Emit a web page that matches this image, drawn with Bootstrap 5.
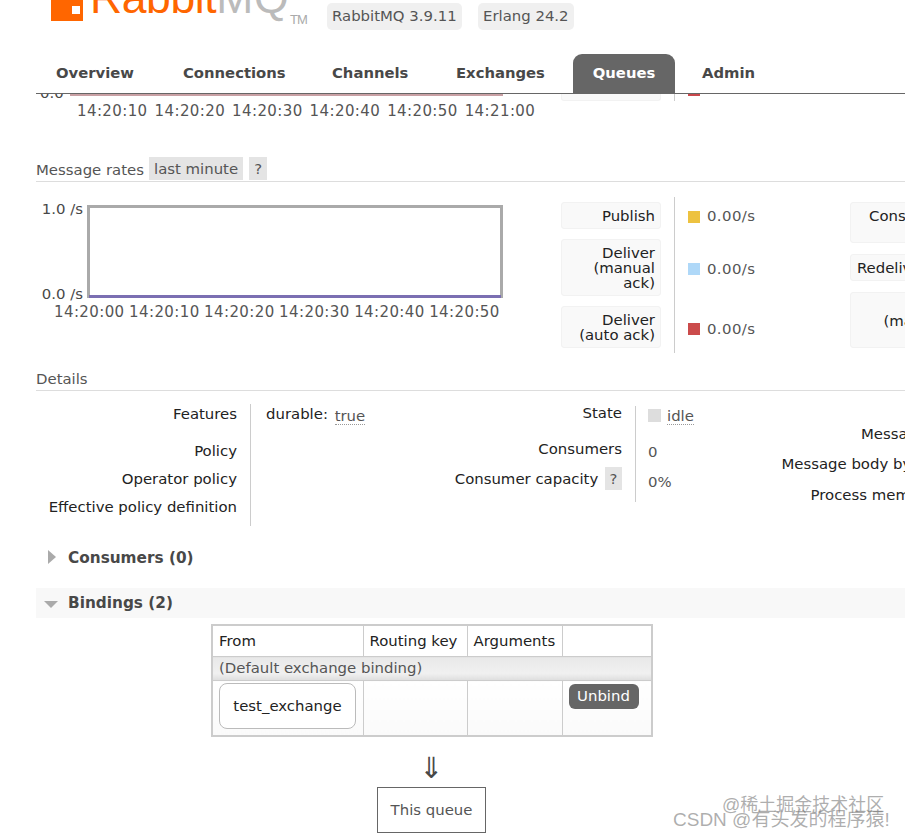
<!DOCTYPE html>
<html lang="en">
<head>
  <meta charset="UTF-8" />
  <title>RabbitMQ Management</title>
  <link href="https://cdn.jsdelivr.net/npm/bootstrap@5.3.0/dist/css/bootstrap.min.css" rel="stylesheet" />
  <style>
    html, body { height: 838px; overflow: hidden; }
    body { font-family: "DejaVu Sans", Verdana, sans-serif; font-size: 14.9px; color: #484848; background: #fff; position: relative; }
    a { text-decoration: none; }

    /* header sits over the scrolled page */
    .top-bar { position: absolute; top: 0; left: 0; right: 0; height: 94px; background: #fff; z-index: 5; overflow: hidden; }
    .logo-wrap { height: 22px; margin-left: 51px; width: 240px; gap: 7px; overflow: hidden; }
    .logo-box { width: 32px; height: 21px; background: #f60; position: relative; flex: none; }
    .logo-box::after { content: ""; position: absolute; right: 3px; top: 6px; width: 8px; height: 8px; background: #fff; }
    .logo-text { font-family: "Liberation Sans", Arial, sans-serif; font-size: 44.5px; line-height: 47px; margin-top: -26px; white-space: nowrap; color: #f60; letter-spacing: -.4px; }
    .logo-text span { color: #bbb; letter-spacing: .6px; }
    .logo-tm { font-family: "Liberation Sans", Arial, sans-serif; font-size: 13px; letter-spacing: -1px; color: #aaa; position: absolute; left: 290px; top: 10px; }
    .ver-tag { position: absolute; top: 3px; height: 27px; line-height: 26px; padding: 0 5px; background: #f0f0f0; border-radius: 5px; color: #555; white-space: nowrap; }
    .tab-row { position: absolute; left: 36px; right: 0; top: 54px; height: 40px; border-bottom: 1px solid #666; }
    .tab-item { position: absolute; top: 0; height: 40px; line-height: 38px; font-weight: 700; font-size: 14.8px; color: #484848; white-space: nowrap; }
    .tab-on { background: #666; color: #fff; border-radius: 9px 9px 0 0; width: 102px; text-align: center; height: 40px; }

    .page-main { padding: 84px 0 0 36px; width: 1100px; }
    .rate-block { display: flex; }
    .plot-col { width: 525px; flex: none; }
    .y-tick { width: 47px; text-align: right; }
    .plot-box { width: 416px; height: 93px; border: 3px solid #aaa; border-bottom: 0; position: relative; margin: 8px 0 0 4px; }
    .plot-box::after { content: ""; position: absolute; left: -1px; right: -1px; bottom: 0; height: 3px; background: #7b6fb2; }
    .y-axis { height: 108px; width: 47px; padding-top: 1px; }
    .x-axis { color: #555; white-space: nowrap; line-height: 16px; font-size: 15px; letter-spacing: .4px; }

    .leg-grid { display: grid; grid-template-columns: 100px 13px 1px 13px 162px; row-gap: 10px; padding: 5px 0 5px; align-items: stretch; }
    .leg-line { grid-column: 3; grid-row: 1 / -1; background: #ccc; margin: -5px 0; }
    .leg-name { grid-column: 1; background: #f9f9f9; border: 1px solid #f2f2f2; border-radius: 3px; color: #222; text-align: right; line-height: 15px; padding: 6px 5px 0 0; }
    .leg-val { grid-column: 5; display: flex; align-items: center; gap: 7px; color: #555; letter-spacing: .4px; padding-top: 2px; }
    .leg-dot { width: 12px; height: 12px; flex: none; }
    .leg-second { grid-template-columns: 105px; row-gap: 11px; }
    .leg-second .leg-name { padding-right: 9px; }

    .sec-head { border-bottom: 1px solid #ddd; color: #555; height: 25px; line-height: 26px; gap: 5px; }
    .help-tag { background: #e4e4e4; padding: 0 5px; height: 23px; line-height: 25px; color: #555; display: inline-block; }

    .kv-grid { display: grid; }
    .kv-label { color: #222; text-align: right; white-space: nowrap; padding-right: 13px; border-right: 1px solid #ccc; line-height: 14px; }
    .kv-val { color: #555; white-space: nowrap; line-height: 20px; }
    .kv-first { width: 215px; grid-template-columns: 215px 260px; grid-template-rows: 37px 28px 28px 29px; }
    .kv-first .kv-label { line-height: 20px; }
    .kv-first .kv-val { padding-left: 15px; }
    .kv-second { grid-template-columns: 186px 120px; grid-template-rows: 36px 30px 30px; margin-top: 2px; }
    .kv-second .kv-val { padding-left: 12px; }
    .kv-third { margin-top: 20px; grid-template-columns: 170px; grid-template-rows: 30px 31px 30px; }
    .kv-third .kv-label { border-right: 0; padding-right: 0; line-height: 20px; }
    .dash-under { border-bottom: 1px dotted #999; line-height: 15px; display: inline-block; }
    .true-val { margin: 5px 0 0 2px; vertical-align: top; }
    .state-dot { width: 13px; height: 13px; background: #ddd; display: inline-block; margin-right: 6px; vertical-align: -1px; }
    .kv-help { margin: -5px 0 -5px 2px; height: 23px; width: 17px; padding: 0; text-align: center; vertical-align: top; }

    .fold-head { font-weight: 700; color: #484848; font-size: 15.3px; padding-left: 32px; position: relative; }
    .fold-closed { height: 30px; line-height: 30px; margin-top: 17px; }
    .fold-closed::before { content: ""; position: absolute; left: 12px; top: 7px; border-left: 8px solid #aaa; border-top: 7px solid transparent; border-bottom: 7px solid transparent; }
    .fold-open { height: 30px; line-height: 30px; margin-top: 15px; background: #f8f8f8; }
    .fold-open::before { content: ""; position: absolute; left: 8px; top: 13px; border-top: 7px solid #aaa; border-left: 7px solid transparent; border-right: 7px solid transparent; }

    .bind-wrap { margin: 6px 0 0 175px; width: 441px; }
    .bind-table { width: 440px; table-layout: fixed; border-collapse: collapse; border: 2px solid #ccc; color: #222; }
    .bind-table th, .bind-table td { border: 1px solid #ccc; font-weight: 400; padding: 0 6px; vertical-align: top; }
    .bind-table thead th { height: 30px; line-height: 30px; }
    .bind-group td { height: 24px; line-height: 22px; color: #555; background: linear-gradient(#e8e8e8, #f0f0f0 70%, #ddd); }
    .bind-body td { height: 55px; background: linear-gradient(#fff, #fafafa); }
    .exch-box { display: block; width: 137px; height: 46px; line-height: 44px; border: 1px solid #bbb; border-radius: 8px; text-align: center; background: #fff; margin: 2px 0 0; color: #222; }
    .unbind-btn { background: #666; color: #fff; border: 0; border-radius: 6px; height: 25px; width: 70px; padding: 0; line-height: 25px; margin-top: 3px; font-size: 14.9px; }
    .flow-arrow { font-size: 29px; line-height: 30px; text-align: center; margin-top: 16px; color: #484848; height: 34px; }
    .queue-box { width: 109px; height: 46px; line-height: 44px; border: 1px solid #666; text-align: center; margin: 0 auto; color: #555; }

    .mark-text { position: absolute; font-family: "Liberation Sans", "Noto Sans CJK SC", sans-serif; font-size: 18px; color: rgba(120,120,120,.6); white-space: nowrap; z-index: 6; line-height: 20px; }
  </style>
</head>
<body>
  <header class="top-bar">
    <div class="logo-wrap d-flex align-items-start">
      <div class="logo-box"></div>
      <div class="logo-text">Rabbit<span>MQ</span></div>
    </div>
    <div class="logo-tm">TM</div>
    <span class="ver-tag" style="left:327px">RabbitMQ 3.9.11</span>
    <span class="ver-tag" style="left:478px">Erlang 24.2</span>
    <nav class="tab-row">
      <a class="tab-item" style="left:20px">Overview</a>
      <a class="tab-item" style="left:147px">Connections</a>
      <a class="tab-item" style="left:296px">Channels</a>
      <a class="tab-item" style="left:420px">Exchanges</a>
      <a class="tab-item tab-on" style="left:537px">Queues</a>
      <a class="tab-item" style="left:666px">Admin</a>
    </nav>
  </header>

  <main class="page-main">
    <!-- tail of the chart above, scrolled under the header -->
    <div class="rate-block" style="height:36px">
      <div class="plot-col">
        <div class="d-flex" style="height:19px">
          <div style="width:34px;padding:0 0 0 4px;line-height:18px">0.0</div>
          <div style="width:433px;height:2px;background:#c9a0a4;margin-top:10px"></div>
        </div>
        <div class="x-axis" style="padding-left:41px;word-spacing:1.8px">14:20:10 14:20:20 14:20:30 14:20:40 14:20:50 14:21:00</div>
      </div>
      <div class="leg-grid" style="padding:0;row-gap:0;grid-template-rows:17px;height:23px">
        <div class="leg-name" style="border-top:0"></div>
        <div class="leg-line" style="margin:0"></div>
        <div class="leg-val" style="align-items:flex-start;padding:0"><span class="leg-dot" style="background:#c9484c"></span></div>
      </div>
    </div>

    <div class="sec-head d-flex" style="margin-top:37px">
      <span>Message rates</span><span class="help-tag">last minute</span><span class="help-tag" style="margin-left:1px">?</span>
    </div>

    <div class="rate-block" style="margin-top:15px;height:156px">
      <div class="plot-col">
        <div class="d-flex">
          <div class="y-axis d-flex flex-column justify-content-between">
            <div class="y-tick">1.0&nbsp;/s</div>
            <div class="y-tick">0.0&nbsp;/s</div>
          </div>
          <div class="plot-box"></div>
        </div>
        <div class="x-axis" style="padding-left:18px;margin-top:-1px;word-spacing:-.7px">14:20:00 14:20:10 14:20:20 14:20:30 14:20:40 14:20:50</div>
      </div>
      <div class="leg-grid" style="grid-template-rows:27px 57px 42px">
        <div class="leg-line"></div>
        <div class="leg-name" style="grid-row:1">Publish</div>
        <div class="leg-val" style="grid-row:1"><span class="leg-dot" style="background:#edc240"></span>0.00/s</div>
        <div class="leg-name" style="grid-row:2">Deliver<br>(manual<br>ack)</div>
        <div class="leg-val" style="grid-row:2;padding-top:3px"><span class="leg-dot" style="background:#afd8f8"></span>0.00/s</div>
        <div class="leg-name" style="grid-row:3">Deliver<br>(auto ack)</div>
        <div class="leg-val" style="grid-row:3;padding-top:4px"><span class="leg-dot" style="background:#cb4b4b"></span>0.00/s</div>
      </div>
      <div class="leg-grid leg-second" style="grid-template-rows:41px 27px 56px">
        <div class="leg-name">Consumer<br>ack</div>
        <div class="leg-name">Redelivered</div>
        <div class="leg-name">Get<br>(manual<br>ack)</div>
      </div>
    </div>

    <div class="sec-head" style="margin-top:13px">Details</div>

    <div class="d-flex" style="margin-top:13px">
      <div class="kv-grid kv-first">
        <div class="kv-label">Features</div><div class="kv-val"><span style="color:#222">durable:</span> <span class="dash-under true-val">true</span></div>
        <div class="kv-label">Policy</div><div class="kv-val"></div>
        <div class="kv-label">Operator policy</div><div class="kv-val"></div>
        <div class="kv-label">Effective policy definition</div><div class="kv-val"></div>
      </div>
      <div class="kv-grid kv-second" style="margin-left:199px">
        <div class="kv-label">State</div><div class="kv-val"><span class="state-dot"></span><span class="dash-under">idle</span></div>
        <div class="kv-label">Consumers</div><div class="kv-val">0</div>
        <div class="kv-label">Consumer capacity <span class="help-tag kv-help">?</span></div><div class="kv-val">0%</div>
      </div>
      <div class="kv-grid kv-third" style="margin-left:8px">
        <div class="kv-label">Messages</div>
        <div class="kv-label">Message body bytes</div>
        <div class="kv-label">Process memory</div>
      </div>
    </div>

    <div class="fold-head fold-closed">Consumers (0)</div>
    <div class="fold-head fold-open">Bindings (2)</div>

    <div class="bind-wrap">
      <table class="bind-table">
        <colgroup><col style="width:151px"><col style="width:104px"><col style="width:95px"><col style="width:90px"></colgroup>
        <thead>
          <tr><th>From</th><th>Routing key</th><th>Arguments</th><th></th></tr>
        </thead>
        <tbody>
          <tr class="bind-group"><td colspan="4">(Default exchange binding)</td></tr>
          <tr class="bind-body">
            <td><a class="exch-box">test_exchange</a></td>
            <td></td>
            <td></td>
            <td><button class="unbind-btn btn">Unbind</button></td>
          </tr>
        </tbody>
      </table>
      <div class="flow-arrow">⇓</div>
      <div class="queue-box">This queue</div>
    </div>
  </main>

  <div class="mark-text" style="left:722px;top:795px">@稀土掘金技术社区</div>
  <div class="mark-text" style="left:673px;top:810px;font-size:19px">CSDN @有头发的程序猿!</div>

  <script src="https://cdn.jsdelivr.net/npm/bootstrap@5.3.0/dist/js/bootstrap.bundle.min.js"></script>
</body>
</html>
